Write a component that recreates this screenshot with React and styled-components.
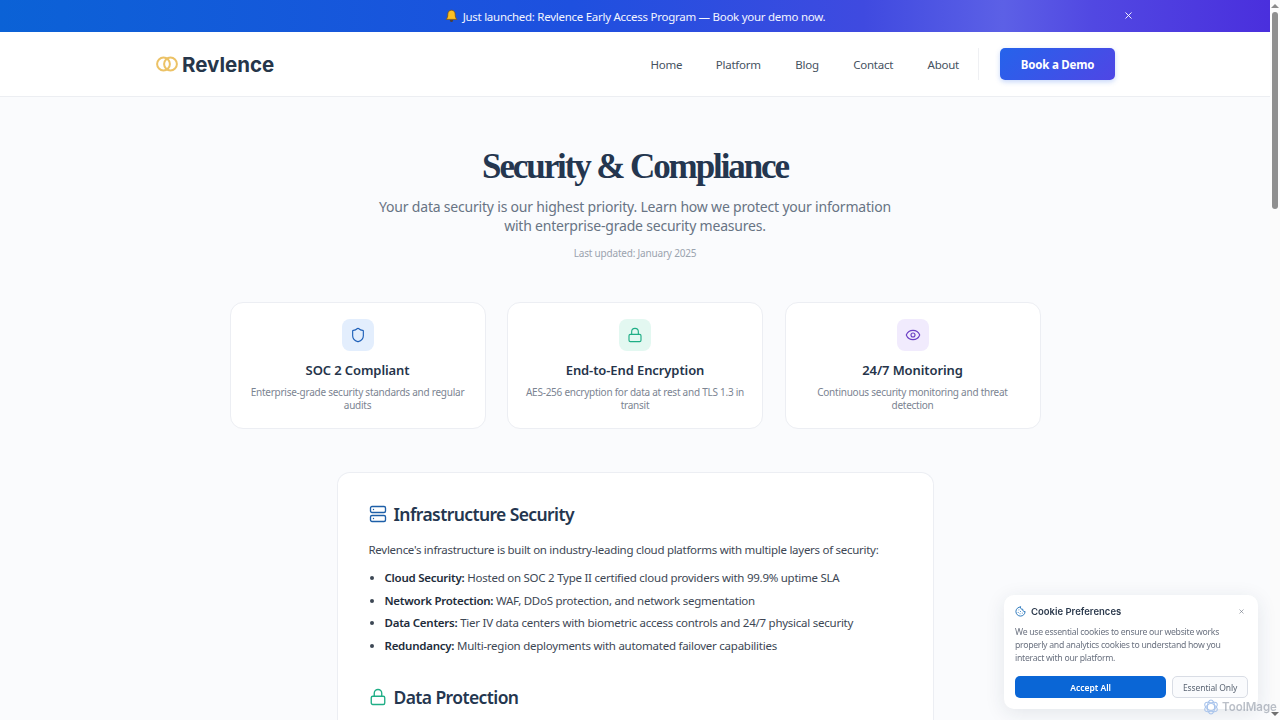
import React from 'react'
import styled, { createGlobalStyle } from 'styled-components'
import { Shield, Lock, Eye, Server, Cookie, X } from 'lucide-react'

const GlobalStyle = createGlobalStyle`
  html, body { height: 100%; }
  body {
    margin: 0;
    overflow: hidden;
    background: #fafbfd;
    font-family: "Noto Sans", "Open Sans", sans-serif;
    color: #1f2d3d;
  }
`

const features = [
  { icon: Shield, bg: '#e3eefd', fg: '#1d5fb8', title: 'SOC 2 Compliant', text: 'Enterprise-grade security standards and regular audits' },
  { icon: Lock, bg: '#e3f8f1', fg: '#1fae86', title: 'End-to-End Encryption', text: 'AES-256 encryption for data at rest and TLS 1.3 in transit' },
  { icon: Eye, bg: '#f1ebfd', fg: '#6b3fc4', title: '24/7 Monitoring', text: 'Continuous security monitoring and threat detection' },
]

const infrastructure = [
  ['Cloud Security:', 'Hosted on SOC 2 Type II certified cloud providers with 99.9% uptime SLA'],
  ['Network Protection:', 'WAF, DDoS protection, and network segmentation'],
  ['Data Centers:', 'Tier IV data centers with biometric access controls and 24/7 physical security'],
  ['Redundancy:', 'Multi-region deployments with automated failover capabilities'],
]

function BellIcon() {
  return (
    <svg width="13" height="14" viewBox="0 0 13 14">
      <path d="M6.5 1.2c-2.4 0-3.7 1.8-3.7 4.1 0 2.500-.5 3.700-1.600 5.100h10.600c-1.100-1.400-1.600-2.600-1.600-5.100 0-2.300-1.300-4.100-3.700-4.100z" fill="#fbbf24" stroke="#7c4a03" strokeWidth="0.7" />
      <path d="M4.800 11.200c.2 1 .9 1.600 1.700 1.600s1.500-.6 1.700-1.600z" fill="#5f3a06" />
    </svg>
  )
}

function LogoMark() {
  return (
    <svg width="22" height="16" viewBox="0 0 22 16" fill="none" stroke="#ecc266" strokeWidth="2">
      <circle cx="7.500" cy="8" r="6.400" />
      <circle cx="14.500" cy="8" r="6.400" />
    </svg>
  )
}

function WatermarkMark() {
  return (
    <svg width="16" height="16" viewBox="0 0 16 16" fill="none" stroke="#a9c4ec" strokeWidth="1.100">
      <ellipse cx="8" cy="8" rx="3.600" ry="7" />
      <ellipse cx="8" cy="8" rx="3.600" ry="7" transform="rotate(60 8 8)" />
      <ellipse cx="8" cy="8" rx="3.600" ry="7" transform="rotate(120 8 8)" />
    </svg>
  )
}

function App() {
  return (
    <>
      <GlobalStyle />
      <Frame>
        <Page>
          <Banner>
            <BellIcon />
            <BannerText>Just launched: Revlence Early Access Program — Book your demo now.</BannerText>
            <BannerClose><X size={11} strokeWidth={2} /></BannerClose>
          </Banner>
          <Header>
            <HeaderInner>
              <Logo>
                <LogoMark />
                <LogoText>Revlence</LogoText>
              </Logo>
              <Nav>
                <NavLink>Home</NavLink>
                <NavLink>Platform</NavLink>
                <NavLink>Blog</NavLink>
                <NavLink>Contact</NavLink>
                <NavLink>About</NavLink>
                <NavDivider />
                <DemoButton>Book a Demo</DemoButton>
              </Nav>
            </HeaderInner>
          </Header>
          <Hero>
            <Title>Security &amp; Compliance</Title>
            <Subtitle>Your data security is our highest priority. Learn how we protect your information with enterprise-grade security measures.</Subtitle>
            <Updated>Last updated: January 2025</Updated>
          </Hero>
          <FeatureGrid>
            {features.map((f) => (
              <FeatureCard key={f.title}>
                <IconBox $bg={f.bg} $fg={f.fg}><f.icon size={16} strokeWidth={1.7} /></IconBox>
                <FeatureTitle>{f.title}</FeatureTitle>
                <FeatureText>{f.text}</FeatureText>
              </FeatureCard>
            ))}
          </FeatureGrid>
          <Content>
            <SectionTitle>
              <SectionIcon $fg="#1d5fa8"><Server size={18} strokeWidth={1.8} /></SectionIcon>
              Infrastructure Security
            </SectionTitle>
            <Paragraph>Revlence's infrastructure is built on industry-leading cloud platforms with multiple layers of security:</Paragraph>
            <List>
              {infrastructure.map(([label, text]) => (
                <li key={label}><strong>{label}</strong> {text}</li>
              ))}
            </List>
            <NextTitle>
              <SectionIcon $fg="#1fae86"><Lock size={18} strokeWidth={1.8} /></SectionIcon>
              Data Protection
            </NextTitle>
          </Content>
        </Page>
        <ScrollTrack>
          <ScrollArrow $dir="up" />
          <ScrollThumb />
          <ScrollArrow $dir="down" />
        </ScrollTrack>
      </Frame>
      <CookieCard>
        <CookieHead>
          <CookieIcon><Cookie size={11} strokeWidth={2} /></CookieIcon>
          <CookieTitle>Cookie Preferences</CookieTitle>
          <CookieClose><X size={7} strokeWidth={2} /></CookieClose>
        </CookieHead>
        <CookieText>We use essential cookies to ensure our website works properly and analytics cookies to understand how you interact with our platform.</CookieText>
        <CookieActions>
          <AcceptButton>Accept All</AcceptButton>
          <EssentialButton>Essential Only</EssentialButton>
        </CookieActions>
      </CookieCard>
      <Watermark>
        <WatermarkMark />
        ToolMage
      </Watermark>
    </>
  )
}

export default App

const Frame = styled.div`
  display: flex;
  height: 100vh;
  overflow: hidden;
`

const Page = styled.div`
  flex: 1;
  min-width: 0;
  display: flex;
  flex-direction: column;
`

const ScrollTrack = styled.div`
  width: 10px;
  flex-shrink: 0;
  display: flex;
  flex-direction: column;
  align-items: center;
  justify-content: space-between;
  background: #fbfbfb;
  padding: 4px 0;
  box-sizing: border-box;
`

const ScrollArrow = styled.span`
  width: 0;
  height: 0;
  border-left: 4px solid transparent;
  border-right: 4px solid transparent;
  ${(p) => (p.$dir === 'up' ? 'border-bottom: 4px solid #8a8a8a;' : 'border-top: 4px solid #6f6f6f;')}
`

const ScrollThumb = styled.span`
  width: 6px;
  height: 197px;
  margin-top: 4px;
  margin-bottom: auto;
  border-radius: 3px;
  background: #8f8f8f;
`

const Banner = styled.div`
  position: relative;
  flex-shrink: 0;
  height: 32px;
  display: flex;
  align-items: center;
  justify-content: center;
  gap: 5px;
  background: linear-gradient(90deg, #0b62d6 0%, #1e50df 45%, #3f4ae0 68%, #5c60e6 79%, #5148e2 86%, #4a2fdd 100%);
`

const BannerText = styled.span`
  font-size: 11.500px;
  letter-spacing: -0.27px;
  color: #f2f5ff;
`

const BannerClose = styled.span`
  position: absolute;
  left: 1123px;
  top: 10px;
  display: flex;
  color: #fff;
`

const Header = styled.header`
  flex-shrink: 0;
  background: #fff;
  border-bottom: 1px solid #eceef2;
`

const HeaderInner = styled.div`
  width: 960px;
  height: 64px;
  margin: 0 auto;
  display: flex;
  align-items: center;
  justify-content: space-between;
`

const Logo = styled.div`
  display: flex;
  align-items: center;
  gap: 4px;
  padding-left: 1px;
`

const LogoText = styled.span`
  font-family: Inter, sans-serif;
  font-size: 20.500px;
  font-weight: 700;
  color: #26364a;
`

const Nav = styled.nav`
  display: flex;
  align-items: center;
`

const NavLink = styled.a`
  font-size: 11.500px;
  letter-spacing: -0.25px;
  color: #46525f;
  margin-right: 34.500px;
  &:nth-child(1) { margin-right: 33.500px; }
  &:nth-child(5) { margin-right: 19px; }
`

const NavDivider = styled.span`
  width: 1px;
  height: 32px;
  background: #eff0f3;
  margin-right: 21px;
`

const DemoButton = styled.button`
  width: 115px;
  height: 32px;
  padding: 0;
  border: none;
  border-radius: 5px;
  background: linear-gradient(135deg, #2563eb, #4f46e5);
  box-shadow: 0 2px 5px rgba(37, 99, 235, 0.25);
  color: #fff;
  font-family: inherit;
  font-size: 11.500px;
  font-weight: 700;
  letter-spacing: -0.2px;
`

const Hero = styled.section`
  padding-top: 48px;
  text-align: center;
`

const Title = styled.h1`
  margin: 0 0 8px;
  font-family: "Liberation Serif", serif;
  font-size: 35px;
  line-height: 44px;
  font-weight: 700;
  letter-spacing: -2.100px;
  color: #24364f;
`

const Subtitle = styled.p`
  width: 540px;
  margin: 0 auto;
  font-size: 14px;
  line-height: 19px;
  letter-spacing: -0.2px;
  color: #687484;
`

const Updated = styled.p`
  margin: 11px 0 0;
  font-size: 10px;
  line-height: 14px;
  letter-spacing: -0.2px;
  color: #9aa3af;
`

const FeatureGrid = styled.div`
  width: 811px;
  margin: 42px auto 0;
  display: grid;
  grid-template-columns: repeat(3, 1fr);
  gap: 21.500px;
`

const FeatureCard = styled.div`
  box-sizing: border-box;
  height: 127px;
  padding: 16px 16px 0;
  background: #fff;
  border: 1px solid #eceef3;
  border-radius: 13px;
  text-align: center;
`

const IconBox = styled.div`
  width: 32px;
  height: 32px;
  margin: 0 auto 10px;
  border-radius: 8px;
  display: flex;
  align-items: center;
  justify-content: center;
  background: ${(p) => p.$bg};
  color: ${(p) => p.$fg};
`

const FeatureTitle = styled.h3`
  margin: 0 0 7px;
  font-size: 13px;
  line-height: 18px;
  font-weight: 600;
  letter-spacing: -0.1px;
  color: #25344a;
`

const FeatureText = styled.p`
  margin: 0;
  font-size: 10px;
  line-height: 13px;
  letter-spacing: -0.25px;
  color: #7b8492;
`

const Content = styled.main`
  box-sizing: border-box;
  flex: 1;
  width: 597px;
  margin: 43px auto 0;
  padding: 28px 32px 0 31px;
  background: #fff;
  border: 1px solid #eceef3;
  border-bottom: none;
  border-radius: 13px 13px 0 0;
`

const SectionTitle = styled.h2`
  display: flex;
  align-items: center;
  gap: 7px;
  margin: 0 0 13px;
  font-size: 17.500px;
  line-height: 26px;
  font-weight: 600;
  letter-spacing: -0.6px;
  color: #24364f;
`

const NextTitle = styled(SectionTitle)`
  margin: 27px 0 0;
`

const SectionIcon = styled.span`
  display: flex;
  color: ${(p) => p.$fg};
`

const Paragraph = styled.p`
  margin: 0 0 8px;
  font-size: 11.500px;
  line-height: 19px;
  letter-spacing: -0.28px;
  color: #3d4754;
`

const List = styled.ul`
  margin: 0;
  padding-left: 16px;
  font-size: 11.500px;
  line-height: 22.600px;
  letter-spacing: -0.25px;
  color: #3d4754;
  strong { font-weight: 600; color: #222c3a; }
`

const CookieCard = styled.aside`
  position: fixed;
  left: 1004px;
  top: 595px;
  box-sizing: border-box;
  width: 254px;
  height: 114px;
  padding: 9px 10px 0 11px;
  background: #fff;
  border-radius: 10px;
  box-shadow: 0 4px 20px rgba(30, 45, 70, 0.1);
`

const CookieHead = styled.div`
  display: flex;
  align-items: center;
  height: 14px;
  gap: 5px;
  margin-bottom: 8px;
`

const CookieIcon = styled.span`
  display: flex;
  color: #1d6fb8;
`

const CookieTitle = styled.span`
  font-family: Inter, sans-serif;
  font-size: 9.500px;
  font-weight: 600;
  color: #2c3a4d;
`

const CookieClose = styled.span`
  display: flex;
  margin-left: auto;
  margin-right: 3px;
  color: #6b7280;
`

const CookieText = styled.p`
  margin: 0 0 11px;
  font-size: 8.700px;
  line-height: 13px;
  letter-spacing: -0.28px;
  color: #6b7280;
`

const CookieActions = styled.div`
  display: flex;
  gap: 6px;
`

const AcceptButton = styled.button`
  width: 152px;
  height: 22px;
  padding: 0;
  border: none;
  border-radius: 5px;
  background: #0a66d6;
  color: #fff;
  font-family: inherit;
  font-size: 8.500px;
  font-weight: 600;
`

const EssentialButton = styled.button`
  width: 76px;
  height: 22px;
  padding: 0;
  border: 1px solid #d9dde5;
  border-radius: 5px;
  background: #fafbfd;
  color: #5b6573;
  font-family: inherit;
  font-size: 8.500px;
  letter-spacing: -0.1px;
`

const Watermark = styled.div`
  position: fixed;
  left: 1203px;
  top: 699px;
  display: flex;
  align-items: center;
  gap: 3px;
  font-family: Inter, sans-serif;
  font-size: 11.500px;
  font-weight: 600;
  color: rgba(120, 130, 145, 0.5);
`
